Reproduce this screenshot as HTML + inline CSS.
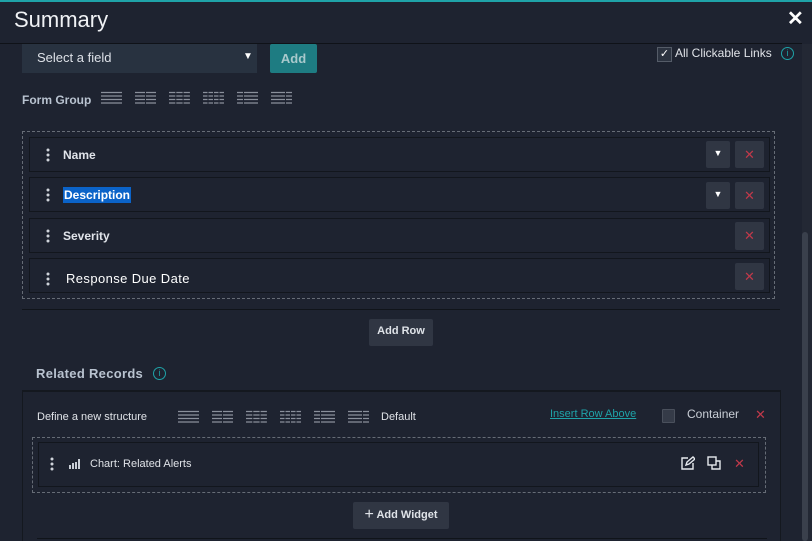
<!DOCTYPE html>
<html style="width:812px;height:541px;overflow:hidden"><head><meta charset="utf-8"><style>
*{box-sizing:border-box;margin:0;padding:0}
body{width:812px;height:541px;overflow:hidden;background:#1e2330;font-family:"Liberation Sans",sans-serif;color:#e6e9ee;position:relative}
.a{position:absolute}
.row{position:absolute;left:29px;width:741px;height:35px;border:1px solid #12161d;background:#1e2330}
.row .dots{position:absolute;left:16px;top:10px;width:4px}
.row .lbl{position:absolute;left:33px;top:10px;font-size:12px;font-weight:bold;color:#e1e4ea}
.btn{position:absolute;background:#303643;border-radius:2px}
.x{color:#c0394a;font-size:13px;text-align:center}
.ic{position:absolute}
</style></head><body>
<div class="a" style="left:0;top:0;width:812px;height:2px;background:#1fa3a8"></div>
<div class="a" style="left:14px;top:7px;font-size:22px;color:#f0f2f5">Summary</div>
<div class="a" style="left:787px;top:6px;font-size:20px;font-weight:bold;color:#fff">✕</div>
<div class="a" style="left:0;top:43px;width:802px;height:1px;background:#0f1218"></div>
<div class="a" style="left:802px;top:44px;width:10px;height:497px;background:#232834"></div>
<div class="a" style="left:802px;top:232px;width:6px;height:309px;background:#3a404c;border-radius:3px"></div>

<div class="a" style="left:22px;top:44px;width:235px;height:29px;background:#283240"></div>
<div class="a" style="left:37px;top:50px;font-size:13px;color:#dde1e7">Select a field</div>
<div class="a" style="left:243px;top:51px;font-size:10px;color:#fff">▼</div>
<div class="a" style="left:270px;top:44px;width:47px;height:29px;background:#1e7c82;border-radius:2px;color:#a9c9cc;font-size:13px;font-weight:bold;text-align:center;line-height:29px">Add</div>

<div class="a" style="left:657px;top:47px;width:15px;height:15px;border:1px solid #555c68;background:#2c3340;color:#fff;font-size:11px;text-align:center;line-height:13px">✓</div>
<div class="a" style="left:675px;top:46px;font-size:12px;color:#e0e3e8">All Clickable Links</div>
<div class="a" style="left:781px;top:47px;width:13px;height:13px;border:1px solid #1fa3a8;border-radius:50%;color:#1fa3a8;font-size:9px;text-align:center;line-height:11px">i</div>

<div class="a" style="left:22px;top:93px;font-size:12px;font-weight:bold;color:#b9c3d0">Form Group</div>
<svg class="ic" style="left:100px;top:91px" width="196" height="14" stroke="#8a909b" stroke-width="1.2">
<g><line x1="1" y1="1.5" x2="22" y2="1.5"/><line x1="1" y1="5" x2="22" y2="5"/><line x1="1" y1="8.5" x2="22" y2="8.5"/><line x1="1" y1="12" x2="22" y2="12"/></g>
<g transform="translate(34,0)" stroke-dasharray="10 1"><line x1="1" y1="1.5" x2="22" y2="1.5"/><line x1="1" y1="5" x2="22" y2="5"/><line x1="1" y1="8.5" x2="22" y2="8.5"/><line x1="1" y1="12" x2="22" y2="12"/></g>
<g transform="translate(68,0)" stroke-dasharray="6.3 1"><line x1="1" y1="1.5" x2="22" y2="1.5"/><line x1="1" y1="5" x2="22" y2="5"/><line x1="1" y1="8.5" x2="22" y2="8.5"/><line x1="1" y1="12" x2="22" y2="12"/></g>
<g transform="translate(102,0)" stroke-dasharray="4.5 1"><line x1="1" y1="1.5" x2="22" y2="1.5"/><line x1="1" y1="5" x2="22" y2="5"/><line x1="1" y1="8.5" x2="22" y2="8.5"/><line x1="1" y1="12" x2="22" y2="12"/></g>
<g transform="translate(136,0)" stroke-dasharray="6 1 30"><line x1="1" y1="1.5" x2="22" y2="1.5"/><line x1="1" y1="5" x2="22" y2="5"/><line x1="1" y1="8.5" x2="22" y2="8.5"/><line x1="1" y1="12" x2="22" y2="12"/></g>
<g transform="translate(170,0)" stroke-dasharray="14 1 30"><line x1="1" y1="1.5" x2="22" y2="1.5"/><line x1="1" y1="5" x2="22" y2="5"/><line x1="1" y1="8.5" x2="22" y2="8.5"/><line x1="1" y1="12" x2="22" y2="12"/></g>
</svg>

<div class="a" style="left:22px;top:131px;width:753px;height:168px;border:1px dashed #666c76"></div>
<div class="row" style="top:137px"><svg class="dots" width="4" height="14"><circle cx="2" cy="2" r="1.5" fill="#cfd3da"/><circle cx="2" cy="7" r="1.5" fill="#cfd3da"/><circle cx="2" cy="12" r="1.5" fill="#cfd3da"/></svg><div class="lbl">Name</div></div>
<div class="row" style="top:177px"><svg class="dots" width="4" height="14"><circle cx="2" cy="2" r="1.5" fill="#cfd3da"/><circle cx="2" cy="7" r="1.5" fill="#cfd3da"/><circle cx="2" cy="12" r="1.5" fill="#cfd3da"/></svg><div class="lbl" style="background:#0b63c8;color:#fff;top:9px;padding:1px 1px">Description</div></div>
<div class="row" style="top:218px"><svg class="dots" width="4" height="14"><circle cx="2" cy="2" r="1.5" fill="#cfd3da"/><circle cx="2" cy="7" r="1.5" fill="#cfd3da"/><circle cx="2" cy="12" r="1.5" fill="#cfd3da"/></svg><div class="lbl">Severity</div></div>
<div class="row" style="top:258px"><svg class="dots" width="4" height="14" style="top:13px"><circle cx="2" cy="2" r="1.5" fill="#cfd3da"/><circle cx="2" cy="7" r="1.5" fill="#cfd3da"/><circle cx="2" cy="12" r="1.5" fill="#cfd3da"/></svg><div class="lbl" style="left:36px;top:12px;font-size:13px;font-weight:normal;color:#fff;letter-spacing:.4px">Response Due Date</div></div>
<div class="btn" style="left:706px;top:141px;width:24px;height:27px;color:#fff;font-size:9px;text-align:center;line-height:24px">▼</div>
<div class="btn x" style="left:735px;top:141px;width:29px;height:27px;line-height:27px">✕</div>
<div class="btn" style="left:706px;top:182px;width:24px;height:27px;color:#fff;font-size:9px;text-align:center;line-height:24px">▼</div>
<div class="btn x" style="left:735px;top:182px;width:29px;height:27px;line-height:27px">✕</div>
<div class="btn x" style="left:735px;top:222px;width:29px;height:28px;line-height:28px">✕</div>
<div class="btn x" style="left:735px;top:263px;width:29px;height:27px;line-height:27px">✕</div>

<div class="a" style="left:22px;top:309px;width:758px;height:1px;background:#10141a"></div>
<div class="btn" style="left:369px;top:319px;width:64px;height:27px;color:#dfe3e8;font-size:11px;font-weight:bold;text-align:center;line-height:24px">Add Row</div>

<div class="a" style="left:36px;top:366px;font-size:13px;font-weight:bold;color:#b9c3d0;letter-spacing:.3px">Related Records</div>
<div class="a" style="left:153px;top:367px;width:13px;height:13px;border:1px solid #1fa3a8;border-radius:50%;color:#1fa3a8;font-size:9px;text-align:center;line-height:11px">i</div>

<div class="a" style="left:22px;top:390px;width:759px;height:151px;border-left:1px solid #14181f;border-right:1px solid #14181f;border-top:2px solid #14181f;background:#1e2330"></div>
<div class="a" style="left:37px;top:411px;font-size:11px;color:#e0e3e8">Define a new structure</div>
<svg class="ic" style="left:177px;top:410px" width="196" height="14" stroke="#8a909b" stroke-width="1.2">
<g><line x1="1" y1="1.5" x2="22" y2="1.5"/><line x1="1" y1="5" x2="22" y2="5"/><line x1="1" y1="8.5" x2="22" y2="8.5"/><line x1="1" y1="12" x2="22" y2="12"/></g>
<g transform="translate(34,0)" stroke-dasharray="10 1"><line x1="1" y1="1.5" x2="22" y2="1.5"/><line x1="1" y1="5" x2="22" y2="5"/><line x1="1" y1="8.5" x2="22" y2="8.5"/><line x1="1" y1="12" x2="22" y2="12"/></g>
<g transform="translate(68,0)" stroke-dasharray="6.3 1"><line x1="1" y1="1.5" x2="22" y2="1.5"/><line x1="1" y1="5" x2="22" y2="5"/><line x1="1" y1="8.5" x2="22" y2="8.5"/><line x1="1" y1="12" x2="22" y2="12"/></g>
<g transform="translate(102,0)" stroke-dasharray="4.5 1"><line x1="1" y1="1.5" x2="22" y2="1.5"/><line x1="1" y1="5" x2="22" y2="5"/><line x1="1" y1="8.5" x2="22" y2="8.5"/><line x1="1" y1="12" x2="22" y2="12"/></g>
<g transform="translate(136,0)" stroke-dasharray="6 1 30"><line x1="1" y1="1.5" x2="22" y2="1.5"/><line x1="1" y1="5" x2="22" y2="5"/><line x1="1" y1="8.5" x2="22" y2="8.5"/><line x1="1" y1="12" x2="22" y2="12"/></g>
<g transform="translate(170,0)" stroke-dasharray="14 1 30"><line x1="1" y1="1.5" x2="22" y2="1.5"/><line x1="1" y1="5" x2="22" y2="5"/><line x1="1" y1="8.5" x2="22" y2="8.5"/><line x1="1" y1="12" x2="22" y2="12"/></g>
</svg>
<div class="a" style="left:381px;top:411px;font-size:11px;color:#e0e3e8">Default</div>
<div class="a" style="left:550px;top:408px;font-size:11px;color:#1fa3a8;text-decoration:underline">Insert Row Above</div>
<div class="a" style="left:662px;top:409px;width:13px;height:14px;border:1px solid #4a505c;background:#353b48;border-radius:1px"></div>
<div class="a" style="left:687px;top:407px;font-size:12px;color:#c9ced6">Container</div>
<div class="a x" style="left:755px;top:407px;">✕</div>

<div class="a" style="left:32px;top:437px;width:734px;height:56px;border:1px dashed #666c76"></div>
<div class="a" style="left:38px;top:442px;width:721px;height:45px;border:1px solid #12161d"></div>
<svg class="a" style="left:50px;top:457px" width="4" height="14"><circle cx="2" cy="2" r="1.5" fill="#cfd3da"/><circle cx="2" cy="7" r="1.5" fill="#cfd3da"/><circle cx="2" cy="12" r="1.5" fill="#cfd3da"/></svg>
<svg class="a" style="left:69px;top:458px" width="12" height="11" fill="#c9ced6"><rect x="0" y="7" width="2" height="4"/><rect x="3" y="5" width="2" height="6"/><rect x="6" y="4" width="2" height="7"/><rect x="9" y="1" width="2" height="10"/></svg>
<div class="a" style="left:90px;top:458px;font-size:11px;color:#dfe2e7">Chart: Related Alerts</div>
<svg class="a" style="left:681px;top:456px" width="14" height="14" fill="none" stroke="#e6e9ee" stroke-width="1.4"><path d="M7 2H1v11h11V7"/><path d="M5 9l1-3 6-5 2 2-6 5z"/></svg>
<svg class="a" style="left:707px;top:456px" width="14" height="14" fill="none" stroke="#e6e9ee" stroke-width="1.4"><rect x="1" y="1" width="8" height="8"/><path d="M5 9v4h8V5H9"/></svg>
<div class="a x" style="left:734px;top:456px;">✕</div>

<div class="btn" style="left:353px;top:502px;width:96px;height:27px;color:#dfe3e8;font-size:11px;font-weight:bold;text-align:center;line-height:26px"><span style="font-size:16px;font-weight:normal;vertical-align:-1px">+</span> Add Widget</div>
<div class="a" style="left:37px;top:538px;width:730px;height:1px;background:#10141a"></div>
</body></html>
